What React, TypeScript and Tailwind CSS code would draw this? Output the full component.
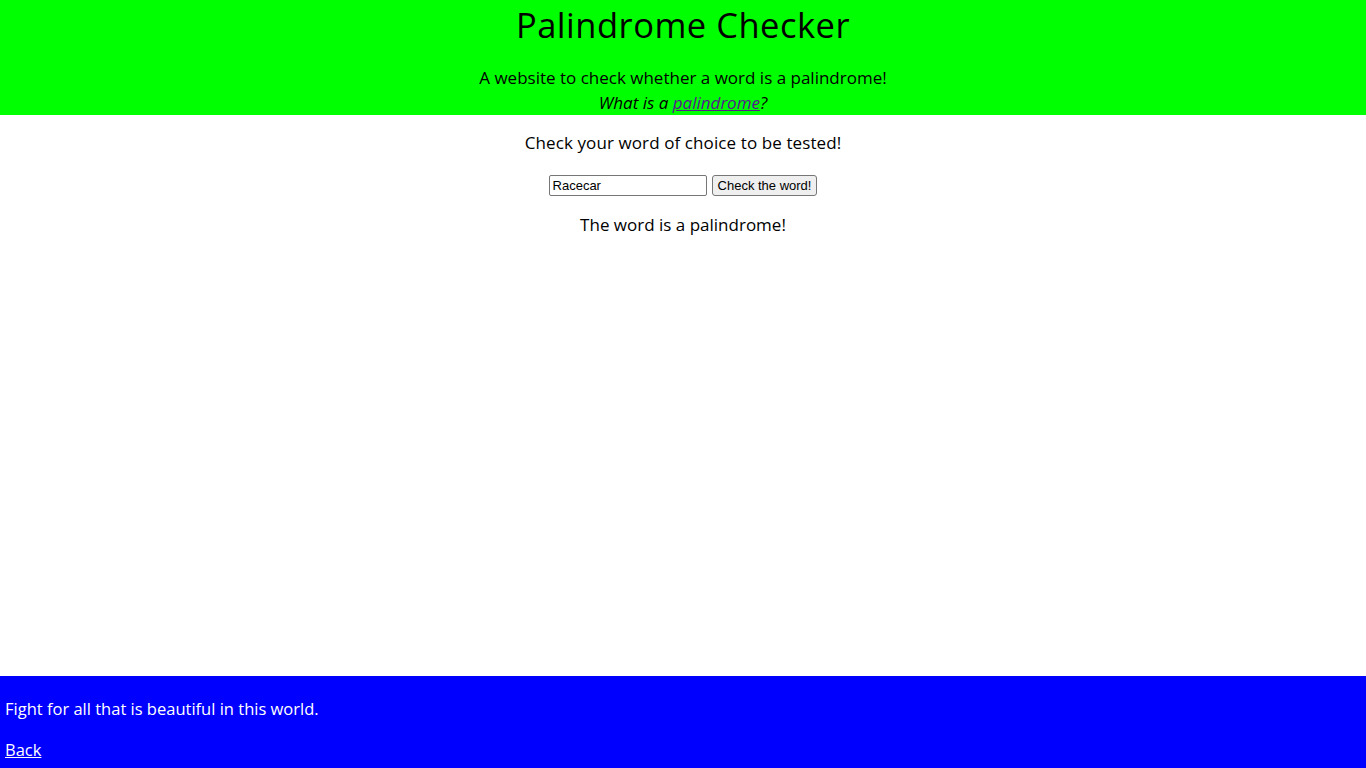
export default function App() {
  return (
    <div className="min-h-screen flex flex-col bg-white text-black" style={{ fontFamily: '"Open Sans", sans-serif' }}>
      {/* Header */}
      <header className="bg-[#00ff00] h-[115px] flex flex-col items-center text-center">
        <h1 className="text-[34.5px] leading-[40px] mt-[5px] tracking-[0.5px]">Palindrome Checker</h1>
        <p className="text-[17px] leading-[25px] mt-[20px]">A website to check whether a word is a palindrome!</p>
        <p className="text-[17px] leading-[25px] italic">
          What is a{" "}
          <a href="#" className="underline text-[#551a8b]">
            palindrome
          </a>
          ?
        </p>
      </header>

      {/* Main */}
      <main className="flex-1 flex flex-col items-center text-center">
        <p className="text-[17px] leading-[25px] mt-[15px] tracking-[0.1px]">Check your word of choice to be tested!</p>
        <div className="flex items-center gap-[5px] mt-[20px]">
          <input
            type="text"
            defaultValue="Racecar"
            className="w-[158px] h-[21px] border border-[#767676] rounded-[2px] px-[3px] outline-none text-[13px]"
            style={{ fontFamily: '"Liberation Sans", Arial, sans-serif' }}
          />
          <button
            className="h-[21px] px-[5px] border border-[#767676] rounded-[3px] bg-[#efefef] text-[13px]"
            style={{ fontFamily: '"Liberation Sans", Arial, sans-serif' }}
          >
            Check the word!
          </button>
        </div>
        <p className="text-[17px] leading-[25px] mt-[16px]">The word is a palindrome!</p>
      </main>

      {/* Footer */}
      <footer className="bg-[#0000ff] h-[92px] text-white px-[5px] pt-[21px] text-[16.5px] leading-[24px]">
        <p>Fight for all that is beautiful in this world.</p>
        <a href="#" className="underline block mt-[17px] w-fit">
          Back
        </a>
      </footer>
    </div>
  );
}
